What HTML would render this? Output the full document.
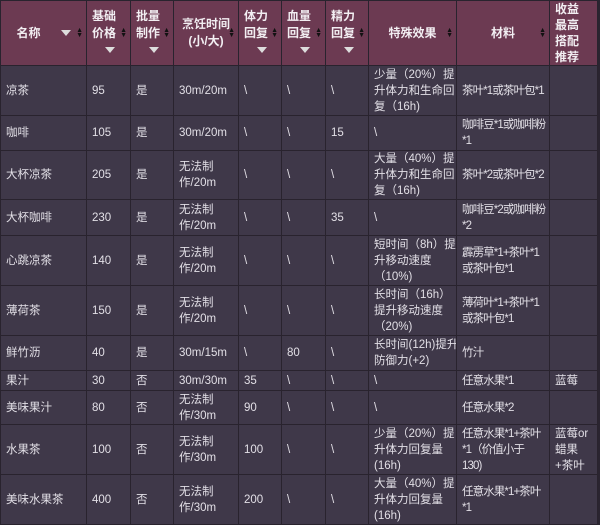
<!DOCTYPE html><html><head><meta charset="utf-8"><style>
body{margin:0;background:#2a2430;width:600px;height:525px;overflow:hidden;font-family:"Liberation Sans","Noto Sans CJK SC",sans-serif;}
table{border-collapse:collapse;table-layout:fixed;width:597px;color:#e2dfe6;font-size:11.5px;line-height:16px}
td,th{border:1px solid #29232e;padding:0 0 0 5px;vertical-align:middle;text-align:left;overflow:hidden;white-space:nowrap}
th{background:#6c3a52;color:#f2eef2;font-weight:bold;height:64px;position:relative;line-height:17px;font-size:12px}
td{background:#3f3849}
td:nth-child(9){letter-spacing:-0.9px}
th.c{text-align:center;padding:0}
.s{position:absolute;right:3px;top:50%;margin-top:-5px;font-size:7px;line-height:5px;color:#111}
.f{display:inline-block;width:0;height:0;border-left:5px solid transparent;border-right:5px solid transparent;border-top:6px solid #ddd;vertical-align:middle}
</style></head><body>
<table>
<colgroup><col style="width:86px"><col style="width:44px"><col style="width:43px"><col style="width:65px"><col style="width:43px"><col style="width:44px"><col style="width:43px"><col style="width:88px"><col style="width:93px"><col style="width:48px"></colgroup>
<tr>
<th class="c">名称 &nbsp; &nbsp; &nbsp;<span class="f"></span><span class="s">▲<br>▼</span></th>
<th>基础<br>价格<br>&nbsp; &nbsp; <span class="f"></span><span class="s">▲<br>▼</span></th>
<th>批量<br>制作<br>&nbsp; &nbsp; <span class="f"></span><span class="s">▲<br>▼</span></th>
<th class="c">烹饪时间<br>(小/大)<span class="s">▲<br>▼</span></th>
<th>体力<br>回复<br>&nbsp; &nbsp; <span class="f"></span><span class="s">▲<br>▼</span></th>
<th>血量<br>回复<br>&nbsp; &nbsp; <span class="f"></span><span class="s">▲<br>▼</span></th>
<th>精力<br>回复<br>&nbsp; &nbsp; <span class="f"></span><span class="s">▲<br>▼</span></th>
<th class="c">特殊效果<span class="s">▲<br>▼</span></th>
<th class="c">材料<span class="s">▲<br>▼</span></th>
<th style="line-height:16px">收益<br>最高<br>搭配<br>推荐</th>
</tr>
<tr style="height:50px"><td>凉茶</td><td>95</td><td>是</td><td>30m/20m</td><td>\</td><td>\</td><td>\</td><td>少量（20%）提<br>升体力和生命回<br>复（16h)</td><td>茶叶*1或茶叶包*1</td><td></td></tr>
<tr style="height:35px"><td>咖啡</td><td>105</td><td>是</td><td>30m/20m</td><td>\</td><td>\</td><td>15</td><td>\</td><td>咖啡豆*1或咖啡粉<br>*1</td><td></td></tr>
<tr style="height:48px"><td>大杯凉茶</td><td>205</td><td>是</td><td>无法制<br>作/20m</td><td>\</td><td>\</td><td>\</td><td>大量（40%）提<br>升体力和生命回<br>复（16h)</td><td>茶叶*2或茶叶包*2</td><td></td></tr>
<tr style="height:36px"><td>大杯咖啡</td><td>230</td><td>是</td><td>无法制<br>作/20m</td><td>\</td><td>\</td><td>35</td><td>\</td><td>咖啡豆*2或咖啡粉<br>*2</td><td></td></tr>
<tr style="height:50px"><td>心跳凉茶</td><td>140</td><td>是</td><td>无法制<br>作/20m</td><td>\</td><td>\</td><td>\</td><td>短时间（8h）提<br>升移动速度<br>（10%)</td><td>霹雳草*1+茶叶*1<br>或茶叶包*1</td><td></td></tr>
<tr style="height:50px"><td>薄荷茶</td><td>150</td><td>是</td><td>无法制<br>作/20m</td><td>\</td><td>\</td><td>\</td><td>长时间（16h）<br>提升移动速度<br>（20%)</td><td>薄荷叶*1+茶叶*1<br>或茶叶包*1</td><td></td></tr>
<tr style="height:35px"><td>鲜竹沥</td><td>40</td><td>是</td><td>30m/15m</td><td>\</td><td>80</td><td>\</td><td>长时间(12h)提升<br>防御力(+2)</td><td>竹汁</td><td></td></tr>
<tr style="height:20px"><td>果汁</td><td>30</td><td>否</td><td>30m/30m</td><td>35</td><td>\</td><td>\</td><td>\</td><td>任意水果*1</td><td>蓝莓</td></tr>
<tr style="height:34px"><td>美味果汁</td><td>80</td><td>否</td><td>无法制<br>作/30m</td><td>90</td><td>\</td><td>\</td><td>\</td><td>任意水果*2</td><td></td></tr>
<tr style="height:50px"><td>水果茶</td><td>100</td><td>否</td><td>无法制<br>作/30m</td><td>100</td><td>\</td><td>\</td><td>少量（20%）提<br>升体力回复量<br>(16h)</td><td>任意水果*1+茶叶<br>*1（价值小于<br>130)</td><td>蓝莓or<br>蜡果<br>+茶叶</td></tr>
<tr style="height:50px"><td>美味水果茶</td><td>400</td><td>否</td><td>无法制<br>作/30m</td><td>200</td><td>\</td><td>\</td><td>大量（40%）提<br>升体力回复量<br>(16h)</td><td>任意水果*1+茶叶<br>*1</td><td></td></tr>
</table>
</body></html>
